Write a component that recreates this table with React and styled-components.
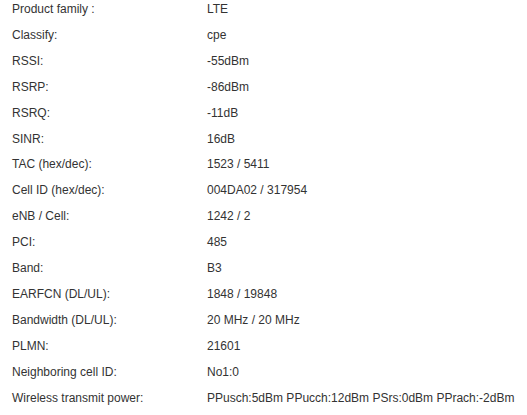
import React from 'react';
import styled, { createGlobalStyle } from 'styled-components';

const GlobalStyle = createGlobalStyle`
  html, body {
    margin: 0;
    padding: 0;
    background: #ffffff;
  }
  body {
    font-family: "Liberation Sans", Arial, sans-serif;
    font-size: 12px;
    color: #333333;
  }
`;

const InfoList = styled.div`
  margin-top: -4px;
  padding-left: 12px;
  display: flex;
  flex-direction: column;
`;

const Row = styled.div`
  display: grid;
  grid-template-columns: 195px 1fr;
  align-items: center;
  height: 25.93px;
  white-space: nowrap;
`;

const Label = styled.span`
  color: #333333;
`;

const Value = styled.span`
  color: #333333;
`;

const rows = [
  ['Product family :', 'LTE'],
  ['Classify:', 'cpe'],
  ['RSSI:', '-55dBm'],
  ['RSRP:', '-86dBm'],
  ['RSRQ:', '-11dB'],
  ['SINR:', '16dB'],
  ['TAC (hex/dec):', '1523 / 5411'],
  ['Cell ID (hex/dec):', '004DA02 / 317954'],
  ['eNB / Cell:', '1242 / 2'],
  ['PCI:', '485'],
  ['Band:', 'B3'],
  ['EARFCN (DL/UL):', '1848 / 19848'],
  ['Bandwidth (DL/UL):', '20 MHz / 20 MHz'],
  ['PLMN:', '21601'],
  ['Neighboring cell ID:', 'No1:0'],
  ['Wireless transmit power:', 'PPusch:5dBm PPucch:12dBm PSrs:0dBm PPrach:-2dBm'],
];

export default function App() {
  return (
    <>
      <GlobalStyle />
      <InfoList>
        {rows.map(([label, value]) => (
          <Row key={label}>
            <Label>{label}</Label>
            <Value>{value}</Value>
          </Row>
        ))}
      </InfoList>
    </>
  );
}
